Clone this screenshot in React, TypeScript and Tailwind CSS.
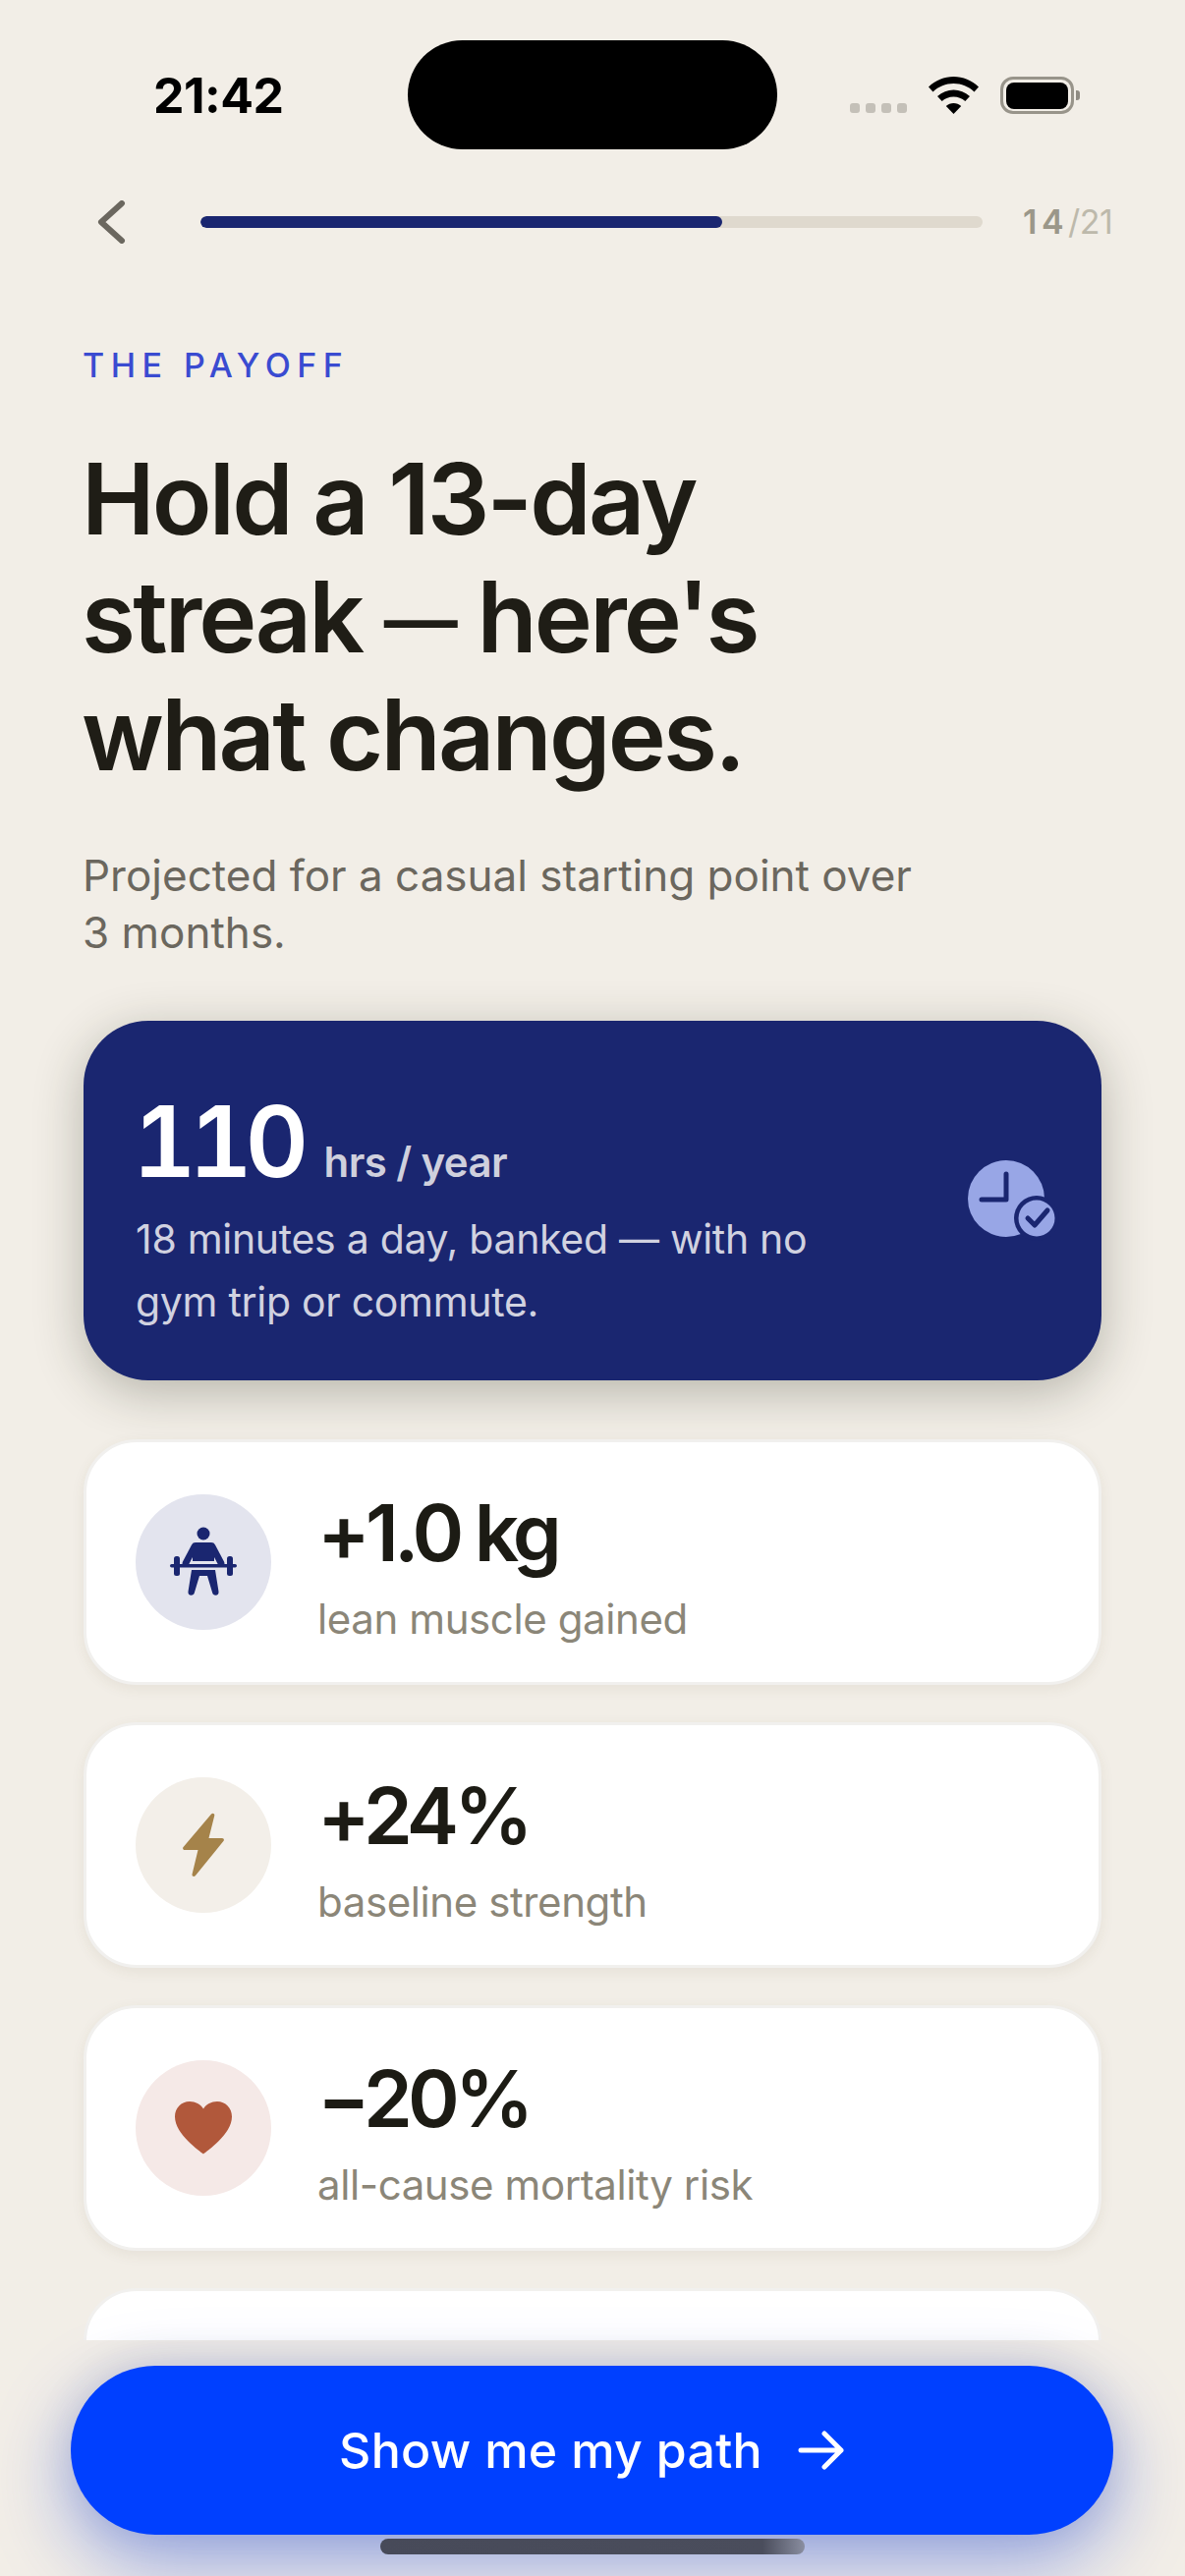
import type { ReactNode } from "react";

type Stat = {
  value: string;
  label: string;
  circle: string;
  icon: ReactNode;
};

function LifterIcon() {
  return (
    <svg width="70" height="72" viewBox="0 0 70 72" fill="#1a2670">
      <circle cx="35" cy="7" r="6.5" />
      <path d="M27 16h16c2 0 3 .8 4 2.500l9 17c1 2 .5 4-1.300 5-1.800.8-3.500.2-4.500-1.500L46 31v4H24v-4l-4.200 8c-1 1.700-2.700 2.300-4.500 1.500-1.800-1-2.300-3-1.300-5l9-17c1-1.700 2-2.500 4-2.500z" />
      <rect x="1" y="38" width="68" height="3.500" rx="1.700" />
      <rect x="5" y="30" width="6" height="20" rx="2.500" />
      <rect x="59" y="30" width="6" height="20" rx="2.500" />
      <path d="M23 44h24l3.500 22c.3 2.200-1 3.800-3 3.800-1.800 0-3-1-3.400-2.800L39 50h-8l-5.100 17c-.4 1.800-1.600 2.800-3.400 2.800-2 0-3.300-1.600-3-3.800z" />
    </svg>
  );
}

function BoltIcon() {
  return (
    <svg width="42" height="66" viewBox="0 0 42 66" fill="#a5834a">
      <path d="M29 1.500c1.700-1.600 3.800-.2 3.200 1.800L26.500 26H40c1.700 0 2.500 1.800 1.400 3.100L13 64c-1.600 1.800-4 .6-3.400-1.500L15.500 38H2c-1.700 0-2.500-1.900-1.400-3.100z" />
    </svg>
  );
}

function HeartIcon() {
  return (
    <svg width="58" height="54" viewBox="0 0 58 54" fill="#b1583b">
      <path d="M29 53.500C26 51 0 33.500 0 15.500 0 6.500 6.500 0 15 0c6 0 11 2.800 14 7.500C32 2.800 37 0 43 0c8.500 0 15 6.500 15 15.500 0 18-26 35.500-29 38z" />
    </svg>
  );
}

const stats: Stat[] = [
  { value: "+1.0 kg", label: "lean muscle gained", circle: "bg-[#e3e4ee]", icon: <LifterIcon /> },
  { value: "+24%", label: "baseline strength", circle: "bg-[#f3efe9]", icon: <BoltIcon /> },
  { value: "−20%", label: "all-cause mortality risk", circle: "bg-[#f5e9e7]", icon: <HeartIcon /> },
];

function StatusBar() {
  return (
    <div className="flex items-start pt-[41px]">
      <div className="w-[415px] pl-[156px] pt-[31px] text-[50px] leading-[50px] font-bold tracking-[-0.5px] text-black">
        21:42
      </div>
      <div className="h-[111px] w-[376px] rounded-[56px] bg-black" />
      <div className="flex flex-1 items-end pl-[74px] pt-[37px]">
        <div className="flex gap-[6px] pb-[1px]">
          <span className="h-[10px] w-[10px] rounded-[3px] bg-[#c4c0b8]" />
          <span className="h-[10px] w-[10px] rounded-[3px] bg-[#c4c0b8]" />
          <span className="h-[10px] w-[10px] rounded-[3px] bg-[#c4c0b8]" />
          <span className="h-[10px] w-[10px] rounded-[3px] bg-[#c4c0b8]" />
        </div>
        <svg className="ml-[22px]" width="51" height="38" viewBox="0 0 51 38" fill="black">
          <path d="M25.500 0C35 0 44 3.800 51 10.500l-4.500 5C40.800 10 33.500 7 25.500 7S10.200 10 4.500 15.500L0 10.500C7 3.800 16 0 25.500 0z" />
          <path d="M25.500 13.500c6 0 11.800 2.300 16.500 6.500l-4.700 5c-3.200-2.900-7.400-4.500-11.800-4.500s-8.600 1.600-11.800 4.500L9 20c4.700-4.200 10.500-6.500 16.500-6.500z" />
          <path d="M25.500 27c2.900 0 5.600 1.100 7.700 3L25.500 38l-7.700-8c2.100-1.900 4.800-3 7.700-3z" />
        </svg>
        <div className="ml-[22px] flex h-[38px] w-[75px] items-center justify-center rounded-[13px] border-[3px] border-[#98948a]">
          <div className="h-[27px] w-[63px] rounded-[8px] bg-black" />
        </div>
        <div className="mb-[14px] ml-[2px] h-[10px] w-[4px] rounded-r-[3px] bg-[#8f8b82]" />
      </div>
    </div>
  );
}

function HeroCard() {
  return (
    <div className="flex h-[366px] items-center justify-between rounded-[66px] bg-[#1a2670] pl-[53px] pr-[43px] shadow-[0_12px_50px_rgba(42,48,30,0.3)]">
      <div className="w-[760px] pt-[24px]">
        <div className="flex items-baseline">
          <span className="-ml-[3px] text-[100px] leading-[100px] font-semibold tracking-[-7.5px] text-white tabular-nums">110</span>
          <span className="ml-[23px] text-[42px] leading-[48px] font-semibold tracking-[-0.6px] text-[#cfd0dd]">hrs / year</span>
        </div>
        <p className="mt-[17px] text-[41px] leading-[64px] tracking-[-0.3px] text-[#d1d2e0]">
          18 minutes a day, banked — with no
          <br />
          gym trip or commute.
        </p>
      </div>
      <svg width="94" height="94" viewBox="0 0 94 94" className="mt-[10px] shrink-0">
        <circle cx="40" cy="40" r="39" fill="#98a6e6" />
        <path d="M40 15v26H15" fill="none" stroke="#1a2670" strokeWidth="5" strokeLinecap="round" strokeLinejoin="round" />
        <circle cx="71" cy="60" r="23" fill="#1a2670" />
        <circle cx="71" cy="60" r="18.500" fill="#98a6e6" />
        <path d="M62 60l7 7 13-15" fill="none" stroke="#1a2670" strokeWidth="5" strokeLinecap="round" strokeLinejoin="round" />
      </svg>
    </div>
  );
}

function StatCard({ stat }: { stat: Stat }) {
  return (
    <div className="flex h-[250px] items-center gap-[47px] rounded-[54px] border-[3px] border-[#f1f0ee] bg-white pl-[50px] shadow-[0_4px_14px_rgba(90,80,40,0.08)]">
      <div className={`flex h-[138px] w-[138px] shrink-0 items-center justify-center rounded-full ${stat.circle}`}>
        {stat.icon}
      </div>
      <div className="pt-[8px]">
        <div className="text-[80px] leading-[92px] font-semibold tracking-[-4.8px] text-[#1c1b14]">{stat.value}</div>
        <div className="mt-[16px] text-[42px] leading-[52px] tracking-[-0.4px] text-[#8b8678]">{stat.label}</div>
      </div>
    </div>
  );
}

export default function App() {
  return (
    <div className="relative h-[2622px] w-[1206px] overflow-hidden bg-[#f2eee7] font-['Inter',sans-serif]">
      <StatusBar />

      {/* nav + progress */}
      <div className="mt-[52px] flex items-center pl-[98px] pr-[73px]">
        <svg width="30" height="44" viewBox="0 0 30 44" fill="none" stroke="#6b675f" strokeWidth="6" strokeLinecap="round" strokeLinejoin="round">
          <path d="M26 3L5 22l21 19" />
        </svg>
        <div className="ml-[76px] h-[12px] w-[796px] overflow-hidden rounded-full bg-[#dfd9ce]">
          <div className="h-full w-[531px] rounded-full bg-[#1a2670]" />
        </div>
        <div className="ml-[41px] text-[34px] leading-[40px] font-semibold tracking-[4.5px] text-[#9b9789]">
          14<span className="font-normal tracking-[-0.5px] text-[#bdb9ab]">/21</span>
        </div>
      </div>

      <div className="px-[85px]">
        <div className="mt-[104px] -ml-[1px] text-[34px] leading-[40px] font-medium tracking-[6.5px] text-[#3a4bd1]">THE PAYOFF</div>
        <h1 className="mt-[56px] -ml-[2px] text-[100px] leading-[120px] font-semibold tracking-[-2.8px] text-[#1f1d16]">
          Hold a 13-day
          <br />
          streak <span className="align-[6px] text-[75px] leading-[0]">—</span> here's
          <br />
          what changes.
        </h1>
        <p className="mt-[54px] -ml-[1px] text-[44px] leading-[58px] text-[#6b675e]">
          Projected for a casual starting point over
          <br />3 months.
        </p>

        <div className="mt-[61px]">
          <HeroCard />
        </div>

        <div className="mt-[60px] flex flex-col gap-[38px]">
          {stats.map((s) => (
            <StatCard key={s.value} stat={s} />
          ))}
          <div className="h-[250px] rounded-[54px] border-[3px] border-[#f1f0ee] bg-white" />
        </div>
      </div>

      {/* sticky footer over the scrolled list */}
      <div className="absolute inset-x-0 bottom-0 h-[240px] bg-[#f2eee7] px-[72px] pt-[26px]">
        <button className="flex h-[172px] w-[1061px] items-center justify-center rounded-[86px] bg-[#0040ff] text-[50px] leading-[60px] font-medium tracking-[0.3px] text-white shadow-[0_28px_80px_rgba(0,50,220,0.4),0_-4px_40px_rgba(40,40,60,0.1)]">
          Show me my path
          <svg className="ml-[36px]" width="48" height="40" viewBox="0 0 48 40" fill="none" stroke="white" strokeWidth="5" strokeLinecap="round" strokeLinejoin="round">
            <path d="M3 20h41M27 3l17 17-17 17" />
          </svg>
        </button>
      </div>

      {/* home indicator */}
      <div className="absolute bottom-[22px] left-[387px] h-[16px] w-[432px] rounded-full bg-linear-to-r from-[#474a59] via-[#4a4d5c] via-90% to-[#8a8ea0]" />
    </div>
  );
}
